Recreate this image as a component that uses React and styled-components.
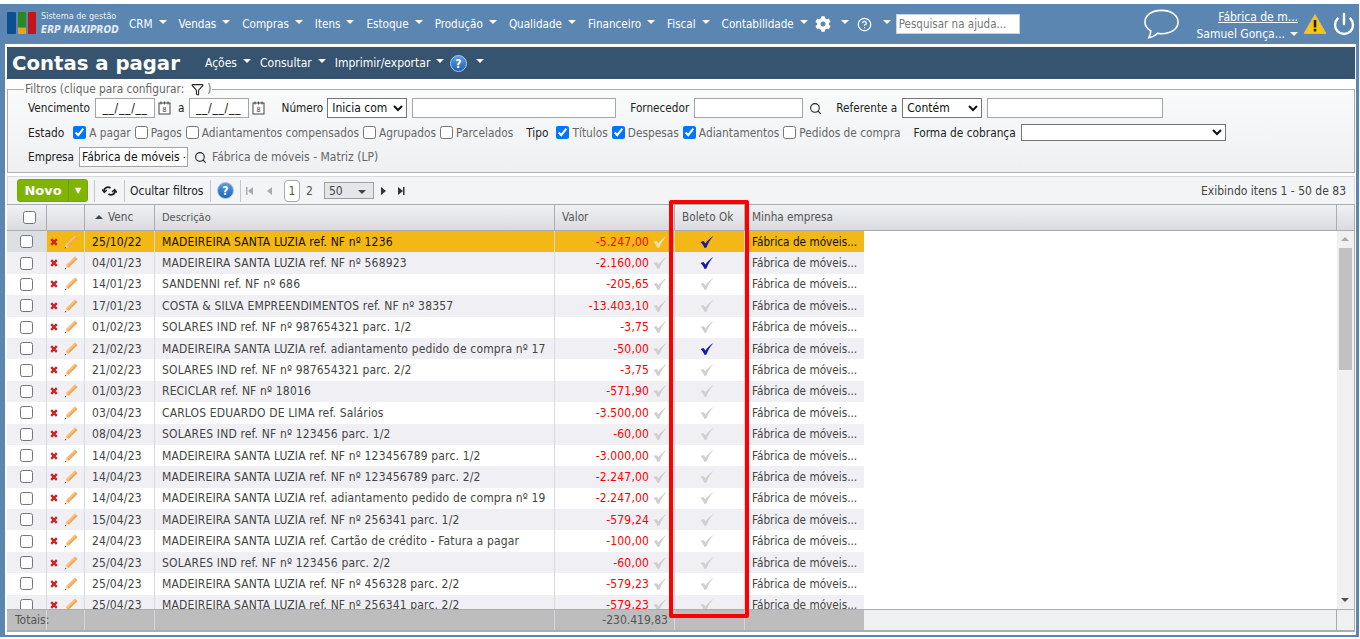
import React from 'react';
import styled, { createGlobalStyle } from 'styled-components';
import { Power, CircleHelp, Search, Funnel } from 'lucide-react';
import { FaCog } from 'react-icons/fa';

const rows = [
  ['25/10/22', 'MADEIREIRA SANTA LUZIA ref. NF nº 1236', '-5.247,00', true],
  ['04/01/23', 'MADEIREIRA SANTA LUZIA ref. NF nº 568923', '-2.160,00', true],
  ['14/01/23', 'SANDENNI ref. NF nº 686', '-205,65', false],
  ['17/01/23', 'COSTA & SILVA EMPREENDIMENTOS ref. NF nº 38357', '-13.403,10', false],
  ['01/02/23', 'SOLARES IND ref. NF nº 987654321 parc. 1/2', '-3,75', false],
  ['21/02/23', 'MADEIREIRA SANTA LUZIA ref. adiantamento pedido de compra nº 17', '-50,00', true],
  ['21/02/23', 'SOLARES IND ref. NF nº 987654321 parc. 2/2', '-3,75', false],
  ['01/03/23', 'RECICLAR ref. NF nº 18016', '-571,90', false],
  ['03/04/23', 'CARLOS EDUARDO DE LIMA ref. Salários', '-3.500,00', false],
  ['08/04/23', 'SOLARES IND ref. NF nº 123456 parc. 1/2', '-60,00', false],
  ['14/04/23', 'MADEIREIRA SANTA LUZIA ref. NF nº 123456789 parc. 1/2', '-3.000,00', false],
  ['14/04/23', 'MADEIREIRA SANTA LUZIA ref. NF nº 123456789 parc. 2/2', '-2.247,00', false],
  ['14/04/23', 'MADEIREIRA SANTA LUZIA ref. adiantamento pedido de compra nº 19', '-2.247,00', false],
  ['15/04/23', 'MADEIREIRA SANTA LUZIA ref. NF nº 256341 parc. 1/2', '-579,24', false],
  ['24/04/23', 'MADEIREIRA SANTA LUZIA ref. Cartão de crédito - Fatura a pagar', '-100,00', false],
  ['25/04/23', 'SOLARES IND ref. NF nº 123456 parc. 2/2', '-60,00', false],
  ['25/04/23', 'MADEIREIRA SANTA LUZIA ref. NF nº 456328 parc. 2/2', '-579,23', false],
  ['25/04/23', 'MADEIREIRA SANTA LUZIA ref. NF nº 256341 parc. 2/2', '-579,23', false],
];

const menu = ['CRM', 'Vendas', 'Compras', 'Itens', 'Estoque', 'Produção', 'Qualidade', 'Financeiro', 'Fiscal', 'Contabilidade'];

const GlobalStyle = createGlobalStyle`
  html, body { margin: 0; height: 100%; overflow: hidden; background: #fff; }
  body { font-family: "DejaVu Sans Condensed", "DejaVu Sans", sans-serif; font-size: 11.7px; color: #333; }
  * { box-sizing: border-box; }
`;

const Page = styled.div`
  width: 1360px;
  height: 639px;
  padding: 4px 1px 0 0;
`;

const Shell = styled.div`
  height: 633px;
  background: #5c86b2;
  padding: 0 3px 2px 5px;
  display: flex;
  flex-direction: column;
`;

const TopBar = styled.header`
  height: 40px;
  flex: none;
  margin-left: -5px;
  padding-left: 7px;
  display: flex;
  align-items: center;
  color: #fff;
`;

const Logo = styled.div`
  width: 122px;
  margin-top: -2px;
  display: flex;
  align-items: center;
  gap: 5px;
`;

const LogoText = styled.div`
  display: flex;
  flex-direction: column;
  line-height: 13px;
  font-size: 9px;
  color: #e4edf5;
  white-space: nowrap;
  em { font-size: 10px; font-weight: bold; }
`;

const Menu = styled.nav`
  display: flex;
  align-items: center;
  gap: 12px;
`;

const MenuItem = styled.span`
  display: flex;
  align-items: center;
  gap: 6px;
  font-size: ${(p) => p.$size || 11.6}px;
  white-space: nowrap;
`;

const Caret = styled.i`
  display: block;
  flex: none;
  width: 0;
  height: 0;
  margin-top: ${(p) => p.$top ?? -4}px;
  border-left: 4px solid transparent;
  border-right: 4px solid transparent;
  border-top: 4px solid ${(p) => p.$color || '#fff'};
`;

const SortCaret = styled(Caret)`
  margin-top: 0;
  border-top: none;
  border-bottom: 4px solid #444;
`;

const IconGroup = styled.span`
  display: flex;
  align-items: center;
  gap: ${(p) => p.$gap ?? 10}px;
  margin-left: ${(p) => p.$ml || 0}px;
`;

const HelpSearch = styled.input`
  width: 124px;
  height: 20px;
  margin-left: 5px;
  padding: 0 2px;
  border: 1px solid #c8d3de;
  font: inherit;
  font-size: 11.5px;
  &::placeholder { color: #777; }
`;

const UserArea = styled.div`
  margin-left: auto;
  display: flex;
  align-items: center;
  height: 100%;
`;

const Bubble = styled.svg`
  width: 37px;
  height: 32px;
  margin-right: 16px;
`;

const UserInfo = styled.div`
  display: flex;
  flex-direction: column;
  align-items: flex-end;
  gap: 3px;
  padding-top: 2px;
  font-size: 12px;
  line-height: 14px;
  white-space: nowrap;
  a { color: #fff; text-decoration: underline; }
`;

const UserName = styled.span`
  display: flex;
  align-items: center;
  gap: 5px;
`;

const Inner = styled.main`
  position: relative;
  flex: 1;
  min-height: 0;
  background: #fff;
  padding: 3px 1px 3px 2px;
  display: flex;
  flex-direction: column;
`;

const TitleBar = styled.div`
  height: 32px;
  flex: none;
  background: #365370;
  color: #fff;
  display: flex;
  align-items: center;
  padding-left: 5px;
`;

const Title = styled.h1`
  margin: 0 25px 0 0;
  width: 168px;
  font-family: "DejaVu Sans", sans-serif;
  font-size: 19.7px;
  font-weight: bold;
  white-space: nowrap;
`;

const TitleMenu = styled(Menu)`
  gap: 9px;
`;

const Filters = styled.fieldset`
  flex: none;
  height: 90px;
  margin: 4px 0 0;
  padding: 1px 0 0 20px;
  border: 1px solid #aaadb0;
  background: linear-gradient(#f9fafa, #eff0f2);
`;

const Legend = styled.legend`
  margin-left: -4px;
  padding: 0 1px;
  display: flex;
  align-items: center;
  gap: 7px;
  font-size: 11.8px;
  line-height: 13px;
  color: #666;
`;

const LegendIcon = styled.span`
  display: flex;
  align-items: center;
  gap: 3px;
`;

const FilterRow = styled.div`
  display: flex;
  align-items: center;
  height: ${(p) => p.$h}px;
  font-size: ${(p) => p.$size || 11.7}px;
  white-space: nowrap;
`;

const Label = styled.label`
  margin-left: ${(p) => p.$ml || 0}px;
  margin-right: ${(p) => p.$mr ?? 5}px;
  color: #222;
`;

const MutedLabel = styled(Label)`
  color: #666;
  font-size: 12px;
`;

const IconSlot = styled.span`
  display: flex;
  margin-left: 3px;
`;

const Field = styled.input`
  width: ${(p) => p.$w}px;
  height: 20px;
  margin-right: ${(p) => p.$mr ?? 0}px;
  padding: 0 2px;
  background: #fff;
  border: 1px solid #a5a5a5;
  font: inherit;
  font-size: 12px;
  color: #111;
`;

const DateField = styled(Field)`
  letter-spacing: 0.7px;
  text-align: center;
`;

const Combo = styled.select`
  width: ${(p) => p.$w}px;
  height: ${(p) => p.$h || 20}px;
  margin-right: 5px;
  font: inherit;
  font-size: 12px;
  color: #111;
  background: #fff;
`;

const Check = styled.label`
  display: flex;
  align-items: center;
  gap: 3px;
  margin-right: 4px;
  color: #666;
  input { margin: 0; width: 13px; height: 13px; }
`;

const Toolbar = styled.div`
  flex: none;
  height: 28px;
  margin-top: 3px;
  padding-left: 9px;
  display: flex;
  align-items: center;
  background: #f3f4f6;
  border: 1px solid #d8dadd;
  border-bottom: none;
`;

const NewButton = styled.button`
  width: 71px;
  height: 23px;
  padding: 0;
  display: flex;
  align-items: center;
  border: 1px solid #78a800;
  border-radius: 3px;
  background: #80b400;
  color: #fff;
  font-family: "DejaVu Sans", sans-serif;
  font-size: 13px;
  font-weight: bold;
  b { flex: 1; }
  span { width: 19px; height: 100%; border-left: 1px solid #6a9a00; font-size: 8px; line-height: 21px; }
`;

const Tool = styled.div`
  height: 22px;
  width: ${(p) => (p.$w ? `${p.$w}px` : 'auto')};
  margin-left: ${(p) => p.$ml || 0}px;
  display: flex;
  align-items: center;
  justify-content: ${(p) => (p.$left ? 'flex-start' : 'center')};
  padding-left: ${(p) => (p.$left ? 5 : 0)}px;
  border-left: 1px solid #c4c7cb;
  color: #222;
  font-size: 12px;
  white-space: nowrap;
`;

const Pager = styled.span`
  display: flex;
  align-items: center;
  color: #555;
`;

const PagerIcon = styled.svg`
  display: block;
  flex: none;
  width: 8px;
  height: 10px;
  margin-right: ${(p) => p.$mr || 0}px;
`;

const PageNo = styled.span`
  width: 16px;
  height: 22px;
  display: flex;
  align-items: center;
  justify-content: center;
  margin-right: 6px;
  background: #fff;
  border: 1px solid #aaa;
  border-radius: 4px;
`;

const PageSize = styled.span`
  width: 50px;
  height: 17px;
  display: flex;
  align-items: center;
  justify-content: space-between;
  margin: 0 6px 0 11px;
  padding: 0 7px 0 4px;
  border: 1px solid #a0a0a0;
  background: #e4e6e9;
  color: #444;
`;

const ItemCount = styled.span`
  margin-left: auto;
  margin-right: 8px;
  font-size: 12px;
  color: #444;
`;

const Grid = styled.section`
  flex: 1;
  min-height: 0;
  display: flex;
  flex-direction: column;
  border-right: 1px solid #aaadb0;
  border-bottom: 2px solid #aaadb0;
  overflow: hidden;
`;

const columns = '40px 38px 70px 400px 120px 70px 119px';

const HeaderRow = styled.div`
  flex: none;
  height: 27px;
  display: grid;
  grid-template-columns: ${columns} 1fr 17px;
  background: linear-gradient(#f0f1f3, #d9dbdf);
  border-top: 1px solid #aaadb0;
  border-bottom: 1px solid #aaadb0;
`;

const HeaderCell = styled.div`
  display: flex;
  align-items: center;
  justify-content: ${(p) => (p.$center ? 'center' : 'flex-start')};
  gap: 5px;
  padding: ${(p) => (p.$center ? 0 : `0 7px ${p.$pb ?? 2}px ${p.$pl || 7}px`)};
  border-right: ${(p) => (p.$last ? 'none' : '1px solid #aaadb0')};
  color: #555;
  font-size: ${(p) => p.$size || 11.7}px;
  white-space: nowrap;
  input { margin: 0 0 0 5px; }
`;

const BodyArea = styled.div`
  flex: 1;
  min-height: 0;
  display: flex;
`;

const RowList = styled.div`
  flex: 1;
  overflow: hidden;
`;

const Row = styled.div`
  height: 21.4px;
  width: 857px;
  display: grid;
  grid-template-columns: ${columns};
  background: ${(p) => (p.$alt ? '#f0f0f4' : '#fff')};
`;

const Cell = styled.div`
  display: flex;
  align-items: center;
  justify-content: ${(p) => p.$justify || 'flex-start'};
  gap: ${(p) => p.$gap || 0}px;
  padding: 0 7px;
  border-right: ${(p) => (p.$last ? 'none' : '1px solid #d8dade')};
  background: ${(p) => (p.$selected ? '#f4b816' : 'transparent')};
  color: ${(p) => (p.$selected ? '#111' : '#444')};
  white-space: nowrap;
  overflow: hidden;
  svg { flex: none; }
`;

const CheckCell = styled(Cell)`
  padding: 0 0 0 13px;
  background: ${(p) => (p.$selected ? '#dbdee3' : 'transparent')};
  input { margin: 0; width: 13px; height: 13px; }
`;

const ActionCell = styled(Cell)`
  padding: 0 0 0 3px;
`;

const TextCell = styled(Cell)`
  font-size: 12px;
  letter-spacing: 0.15px;
`;

const TickCell = styled(Cell)`
  padding: 0 12px 0 6px;
`;

const Amount = styled.span`
  color: #f00;
  font-size: 12px;
  letter-spacing: 0.15px;
`;

const ScrollTrack = styled.div`
  flex: none;
  width: 17px;
  position: relative;
  background: #f0f0f0;
`;

const ScrollThumb = styled.div`
  position: absolute;
  left: 2px;
  top: 17px;
  width: 13px;
  height: 122px;
  background: #c1c1c1;
`;

const ScrollArrow = styled.i`
  position: absolute;
  left: 4px;
  ${(p) => (p.$down ? 'bottom: 7px;' : 'top: 6px;')}
  border-left: 4px solid transparent;
  border-right: 4px solid transparent;
  ${(p) => (p.$down ? 'border-top: 4px solid #505050;' : 'border-bottom: 4px solid #a8a8a8;')}
`;

const Totals = styled.div`
  flex: none;
  height: 21px;
  display: grid;
  grid-template-columns: ${columns} 1fr 17px;
  border-top: 1px solid #aaadb0;
  background: #eff0f2;
`;

const TotalCell = styled.div`
  display: flex;
  align-items: center;
  justify-content: ${(p) => (p.$right ? 'flex-end' : 'flex-start')};
  padding: 0 ${(p) => (p.$right ? 6 : 8)}px;
  background: ${(p) => (p.$plain ? 'transparent' : '#bdbdbd')};
  border-right: ${(p) => (p.$last ? 'none' : `1px solid ${p.$plain ? '#aaadb0' : '#d5d6d8'}`)};
  color: #555;
  font-size: 12px;
  white-space: nowrap;
  z-index: ${(p) => (p.$over ? 1 : 'auto')};
`;

const RedBox = styled.div`
  position: absolute;
  left: 664px;
  top: 156px;
  width: 80px;
  height: 418px;
  border: 4px solid #f00;
  border-radius: 2px;
  pointer-events: none;
`;

const Tick = ({ color = '#cfcfcf' }) => (
  <svg width="14" height="14" viewBox="0 0 14 14">
    <path d="M0.5 7 L3.5 6 L5.5 8.5 C7.5 5.5 10 3 13.5 1 C10.5 4 8 8 6.5 12.5 L4.5 13 C3.8 11 2.5 8.8 0.5 7 Z" fill={color} />
  </svg>
);

const Pencil = () => (
  <svg width="14" height="14" viewBox="0 0 14 14">
    <path d="M11 0.5 L13.5 3 L4.3 12 L1.8 9.5 Z" fill="#f3a64e" />
    <path d="M11 0.5 L12.2 1.7 L3 10.7 L1.8 9.5 Z" fill="#f8c27f" />
    <path d="M1.8 9.5 L4.3 12 L1 13.2 Z" fill="#f4e0bd" />
    <path d="M1.4 11.8 L2.4 12.7 L0.8 13.4 Z" fill="#333" />
  </svg>
);

const Cross = () => (
  <svg width="8" height="8" viewBox="0 0 8 8">
    <path d="M1.2 1.2 L6.8 6.8 M6.8 1.2 L1.2 6.8" stroke="#c9252b" strokeWidth="2.4" />
  </svg>
);

const CalendarIcon = () => (
  <svg width="13" height="14" viewBox="0 0 13 14">
    <rect x="1" y="2" width="11" height="11" fill="#fff" stroke="#444" />
    <path d="M3 0.5 V3.5 M6.5 0.5 V3.5 M10 0.5 V3.5" stroke="#444" />
    <text x="6.5" y="11" fontSize="7" textAnchor="middle" fill="#333">8</text>
  </svg>
);

const HelpBadge = () => (
  <svg width="17" height="17" viewBox="0 0 17 17">
    <defs>
      <linearGradient id="helpFill" x1="0" y1="0" x2="0" y2="1">
        <stop offset="0" stopColor="#5f9fe6" />
        <stop offset="1" stopColor="#1c5fb4" />
      </linearGradient>
    </defs>
    <circle cx="8.5" cy="8.5" r="8" fill="url(#helpFill)" stroke="#a9c6e6" />
    <text x="8.5" y="13" fontSize="12" fontWeight="bold" textAnchor="middle" fill="#fff">?</text>
  </svg>
);

const Warning = () => (
  <svg width="24" height="22" viewBox="0 0 24 22">
    <path d="M12 1.5 L23 20.5 H1 Z" fill="#f7c70f" stroke="#c9b98a" strokeLinejoin="round" />
    <rect x="10.7" y="7" width="2.6" height="7.5" fill="#222" />
    <rect x="10.7" y="15.8" width="2.6" height="2.6" fill="#222" />
  </svg>
);

const RefreshIcon = () => (
  <svg width="15" height="12" viewBox="0 0 15 12" fill="none" stroke="#222" strokeWidth="1.8">
    <path d="M2 7 C1.5 3 5.5 1 8.5 3" />
    <path d="M0 4.5 L2.3 7.5 L4.8 5" strokeWidth="1.3" />
    <path d="M13 5 C13.5 9 9.5 11 6.5 9" />
    <path d="M10 7 L12.7 4.5 L15 7.5" strokeWidth="1.3" />
  </svg>
);

const PagerArrow = ({ dir, bar, color, mr }) => (
  <PagerIcon viewBox="0 0 8 10" $mr={mr}>
    <path d={dir === 'left' ? 'M7 1 V9 L2 5 Z' : 'M1 1 V9 L6 5 Z'} fill={color} />
    {bar && <rect x={dir === 'left' ? 0 : 6} y="1" width="1.5" height="8" fill={color} />}
  </PagerIcon>
);

const App = () => (
  <>
    <GlobalStyle />
    <Page>
      <Shell>
        <TopBar>
          <Logo>
            <svg width="29" height="22" viewBox="0 0 29 22">
              <rect x="0" y="0" width="9" height="22" rx="1" fill="#0e4f92" />
              <rect x="11" y="0" width="8" height="15" rx="1" fill="#2b8a1e" />
              <rect x="11" y="16" width="8" height="6" rx="1" fill="#e8a51c" />
              <rect x="21" y="0" width="8" height="22" rx="1" fill="#c3151b" />
            </svg>
            <LogoText>
              <span>Sistema de gestão</span>
              <em>ERP MAXIPROD</em>
            </LogoText>
          </Logo>
          <Menu>
            {menu.map((item) => (
              <MenuItem key={item}>{item}<Caret /></MenuItem>
            ))}
            <IconGroup $ml={-5}>
              <FaCog size={16} />
              <Caret />
            </IconGroup>
            <IconGroup $ml={-4} $gap={11}>
              <CircleHelp size={15} strokeWidth={2} />
              <Caret />
            </IconGroup>
          </Menu>
          <HelpSearch placeholder="Pesquisar na ajuda..." />
          <UserArea>
            <Bubble viewBox="0 0 38 32" fill="none" stroke="#fff" strokeWidth="1.6">
              <path d="M19 2 C9 2 2 7 2 14 C2 18 4.5 21 8 23 C8 26 7 28 6 30 C10 29.5 13 27.5 15 25.5 C16.5 25.8 17.5 26 19 26 C29 26 36 21 36 14 C36 7 29 2 19 2 Z" />
            </Bubble>
            <UserInfo>
              <a href="#empresa">Fábrica de m...</a>
              <UserName>Samuel Gonça...<Caret $top={0} /></UserName>
            </UserInfo>
            <IconGroup $ml={5}><Warning /></IconGroup>
            <IconGroup $ml={5}><Power size={24} strokeWidth={2.4} /></IconGroup>
          </UserArea>
        </TopBar>

        <Inner>
          <TitleBar>
            <Title>Contas a pagar</Title>
            <TitleMenu>
              <MenuItem $size={12}>Ações<Caret /></MenuItem>
              <MenuItem $size={12}>Consultar<Caret /></MenuItem>
              <MenuItem $size={12}>Imprimir/exportar<Caret /></MenuItem>
              <IconGroup $ml={-3} $gap={9}>
                <HelpBadge />
                <Caret />
              </IconGroup>
            </TitleMenu>
          </TitleBar>

          <Filters>
            <Legend>
              Filtros (clique para configurar:
              <LegendIcon><Funnel size={13} color="#222" />)</LegendIcon>
            </Legend>
            <FilterRow $h={22}>
              <Label>Vencimento</Label>
              <DateField $w={60} defaultValue="__/__/__" />
              <IconSlot><CalendarIcon /></IconSlot>
              <Label $ml={7} $mr={4}>a</Label>
              <DateField $w={60} defaultValue="__/__/__" />
              <IconSlot><CalendarIcon /></IconSlot>
              <Label $ml={17} $mr={4}>Número</Label>
              <Combo $w={80} defaultValue="Inicia com"><option>Inicia com</option></Combo>
              <Field $w={204} />
              <Label $ml={14}>Fornecedor</Label>
              <Field $w={109} $mr={6} />
              <Search size={13} color="#222" />
              <Label $ml={14} $mr={5}>Referente a</Label>
              <Combo $w={80} defaultValue="Contém"><option>Contém</option></Combo>
              <Field $w={176} />
            </FilterRow>
            <FilterRow $h={27} $size={11.8}>
              <Label $mr={9}>Estado</Label>
              <Check><input type="checkbox" defaultChecked />A pagar</Check>
              <Check><input type="checkbox" />Pagos</Check>
              <Check><input type="checkbox" />Adiantamentos compensados</Check>
              <Check><input type="checkbox" />Agrupados</Check>
              <Check><input type="checkbox" />Parcelados</Check>
              <Label $ml={9} $mr={8}>Tipo</Label>
              <Check><input type="checkbox" defaultChecked />Títulos</Check>
              <Check><input type="checkbox" defaultChecked />Despesas</Check>
              <Check><input type="checkbox" defaultChecked />Adiantamentos</Check>
              <Check><input type="checkbox" />Pedidos de compra</Check>
              <Label $ml={9}>Forma de cobrança</Label>
              <Combo $w={205} $h={17}><option></option></Combo>
            </FilterRow>
            <FilterRow $h={22}>
              <Label>Empresa</Label>
              <Field $w={109} $mr={6} defaultValue="Fábrica de móveis - Matriz (LP)" />
              <Search size={13} color="#222" />
              <MutedLabel $ml={5} $mr={0}>Fábrica de móveis - Matriz (LP)</MutedLabel>
            </FilterRow>
          </Filters>

          <Toolbar>
            <NewButton><b>Novo</b><span>▼</span></NewButton>
            <Tool $ml={6} $w={30}><RefreshIcon /></Tool>
            <Tool $w={86} $left>Ocultar filtros</Tool>
            <Tool $w={30}><HelpBadge /></Tool>
            <Tool $left>
              <Pager>
                <PagerArrow dir="left" bar color="#aaa" mr={11} />
                <PagerArrow dir="left" color="#aaa" mr={11} />
                <PageNo>1</PageNo>
                <span>2</span>
                <PageSize>50<Caret $top={2} $color="#444" /></PageSize>
                <PagerArrow dir="right" color="#333" mr={9} />
                <PagerArrow dir="right" bar color="#333" />
              </Pager>
            </Tool>
            <ItemCount>Exibindo itens 1 - 50 de 83</ItemCount>
          </Toolbar>

          <Grid>
            <HeaderRow>
              <HeaderCell $center><input type="checkbox" /></HeaderCell>
              <HeaderCell />
              <HeaderCell $pl={10}><SortCaret />Venc</HeaderCell>
              <HeaderCell $size={11} $pb={0}>Descrição</HeaderCell>
              <HeaderCell>Valor</HeaderCell>
              <HeaderCell>Boleto Ok</HeaderCell>
              <HeaderCell $last>Minha empresa</HeaderCell>
              <HeaderCell />
              <HeaderCell $last />
            </HeaderRow>
            <BodyArea>
              <RowList>
                {rows.map(([date, desc, value, ok], i) => (
                  <Row key={i} $alt={i % 2 === 1}>
                    <CheckCell $selected={i === 0}><input type="checkbox" /></CheckCell>
                    <ActionCell $selected={i === 0} $gap={6}><Cross /><Pencil /></ActionCell>
                    <TextCell $selected={i === 0}>{date}</TextCell>
                    <TextCell $selected={i === 0}>{desc}</TextCell>
                    <Cell $selected={i === 0} $justify="flex-end" $gap={4}>
                      <Amount>{value}</Amount><Tick color={i === 0 ? '#eadfc0' : '#cfcfcf'} />
                    </Cell>
                    <TickCell $selected={i === 0} $justify="center">
                      <Tick color={ok ? '#1a1aa6' : '#d0d0d0'} />
                    </TickCell>
                    <Cell $selected={i === 0} $last>Fábrica de móveis...</Cell>
                  </Row>
                ))}
              </RowList>
              <ScrollTrack>
                <ScrollArrow />
                <ScrollThumb />
                <ScrollArrow $down />
              </ScrollTrack>
            </BodyArea>
            <Totals>
              <TotalCell $over>Totais:</TotalCell>
              <TotalCell />
              <TotalCell />
              <TotalCell />
              <TotalCell $right>-230.419,83</TotalCell>
              <TotalCell />
              <TotalCell $last />
              <TotalCell $plain />
              <TotalCell $plain $last />
            </Totals>
          </Grid>
          <RedBox />
        </Inner>
      </Shell>
    </Page>
  </>
);

export default App;
